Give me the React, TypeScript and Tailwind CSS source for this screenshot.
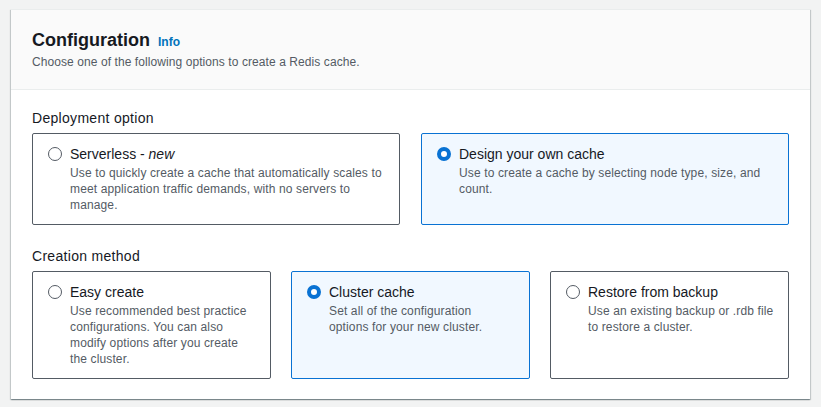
import React from 'react'

interface OptionCardProps {
  title: React.ReactNode
  description: React.ReactNode
  selected?: boolean
}

function Radio({ selected }: { selected?: boolean }) {
  if (selected) {
    return (
      <svg width="14" height="14" viewBox="0 0 14 14" className="shrink-0">
        <circle cx="7" cy="7" r="5" fill="#ffffff" stroke="#0972d3" strokeWidth="4" />
      </svg>
    )
  }
  return (
    <svg width="14" height="14" viewBox="0 0 14 14" className="shrink-0">
      <circle cx="7" cy="7" r="6.5" fill="#ffffff" stroke="#545b64" strokeWidth="1" />
    </svg>
  )
}

function OptionCard({ title, description, selected }: OptionCardProps) {
  return (
    <div
      className={
        selected
          ? 'rounded-[2px] border border-[#0972d3] bg-[#f1f8ff] pl-[15px] pr-[14px] pt-[10px] pb-[11px]'
          : 'rounded-[2px] border border-[#545b64] bg-white pl-[15px] pr-[14px] pt-[10px] pb-[11px]'
      }
    >
      <div className="flex items-start gap-[8px]">
        <div className="flex h-[20px] items-center">
          <Radio selected={selected} />
        </div>
        <div>
          <div className="text-[14px] leading-[20px] text-[#16191f]">{title}</div>
          <p className="mt-[1px] text-[12px] leading-[16px] tracking-[0.13px] text-[#545b64]">{description}</p>
        </div>
      </div>
    </div>
  )
}

export default function App() {
  return (
    <div className="min-h-[407px] bg-[#f2f3f3] pt-[9px] pl-[11px] font-['Liberation_Sans',Arial,sans-serif]">
      <div className="w-[799px] border-t border-[#eaeded] bg-white shadow-[0_1px_1px_0_rgba(0,28,36,0.3),1px_1px_1px_0_rgba(0,28,36,0.15),-1px_1px_1px_0_rgba(0,28,36,0.15)]">
        {/* Header */}
        <div className="border-b border-[#eaeded] bg-[#fafafa] px-[21px] pt-[19px] pb-[19px]">
          <div className="flex items-baseline gap-[8px]">
            <h2 className="text-[18px] font-bold leading-[22px] text-[#16191f]">Configuration</h2>
            <a className="text-[12px] font-bold text-[#0073bb]">Info</a>
          </div>
          <p className="mt-[3px] text-[12px] leading-[16px] tracking-[0.08px] text-[#545b64]">
            Choose one of the following options to create a Redis cache.
          </p>
        </div>

        {/* Body */}
        <div className="px-[21px] pt-[17px] pb-[20px]">
          <div className="text-[14px] leading-[22px] tracking-[0.3px] text-[#16191f]">Deployment option</div>
          <div className="mt-[4px] grid grid-cols-2 gap-[21px]">
            <OptionCard
              title={
                <>
                  Serverless - <i>new</i>
                </>
              }
              description="Use to quickly create a cache that automatically scales to meet application traffic demands, with no servers to manage."
            />
            <OptionCard
              selected
              title="Design your own cache"
              description="Use to create a cache by selecting node type, size, and count."
            />
          </div>

          <div className="mt-[20px] text-[14px] leading-[22px] tracking-[0.3px] text-[#16191f]">Creation method</div>
          <div className="mt-[4px] grid grid-cols-3 gap-[20px]">
            <OptionCard
              title="Easy create"
              description="Use recommended best practice configurations. You can also modify options after you create the cluster."
            />
            <OptionCard
              selected
              title="Cluster cache"
              description={
                <>
                  Set all of the configuration
                  <br />
                  options for your new cluster.
                </>
              }
            />
            <OptionCard
              title="Restore from backup"
              description="Use an existing backup or .rdb file to restore a cluster."
            />
          </div>
        </div>
      </div>
    </div>
  )
}
